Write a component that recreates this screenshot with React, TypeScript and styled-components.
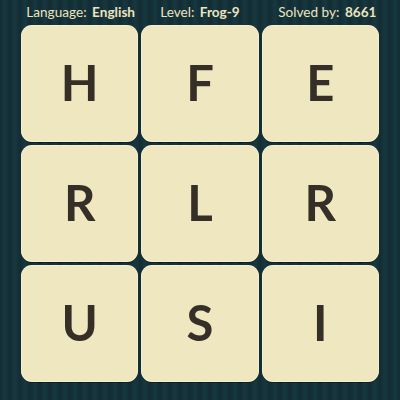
import React from "react";
import styled, { createGlobalStyle } from "styled-components";

const GlobalStyle = createGlobalStyle`
  html, body {
    margin: 0;
    padding: 0;
  }
  body {
    font-family: Lato, "Open Sans", sans-serif;
  }
`;

const Board = styled.div`
  width: 400px;
  height: 400px;
  box-sizing: border-box;
  padding: 0 21px;
  background: repeating-linear-gradient(
    90deg,
    #132c33 0px,
    #173840 5px,
    #132c33 10px
  );
  display: flex;
  flex-direction: column;
`;

const Header = styled.div`
  height: 25px;
  display: grid;
  grid-template-columns: repeat(3, 1fr);
  align-items: center;
  color: #ece3bf;
  font-size: 13.6px;
`;

const Stat = styled.div<{ $shift?: number }>`
  text-align: center;
  white-space: nowrap;
  padding-left: ${(p) => p.$shift ?? 0}px;
  margin-top: -2px;

  b {
    font-weight: 700;
    margin-left: 2px;
  }
`;

const Grid = styled.div`
  display: grid;
  grid-template-columns: repeat(3, 1fr);
  grid-template-rows: repeat(3, 117px);
  gap: 3px;
`;

const Tile = styled.div`
  background: #efe7c0;
  border-radius: 11px;
  box-shadow: 0 1px 0 rgba(0, 0, 0, 0.35), inset 0 0 0 1px rgba(255, 250, 225, 0.4);
  display: flex;
  align-items: center;
  justify-content: center;
  color: #362f27;
  font-size: 49px;
  font-weight: 700;
  line-height: 1;
  padding-bottom: 2px;
`;

const letters = ["H", "F", "E", "R", "L", "R", "U", "S", "I"];

const App: React.FC = () => {
  return (
    <>
      <GlobalStyle />
      <Board>
        <Header>
          <Stat>
            Language: <b>English</b>
          </Stat>
          <Stat>
            Level: <b>Frog-9</b>
          </Stat>
          <Stat $shift={16}>
            Solved by: <b>8661</b>
          </Stat>
        </Header>
        <Grid>
          {letters.map((l, i) => (
            <Tile key={i}>{l}</Tile>
          ))}
        </Grid>
      </Board>
    </>
  );
};

export default App;
